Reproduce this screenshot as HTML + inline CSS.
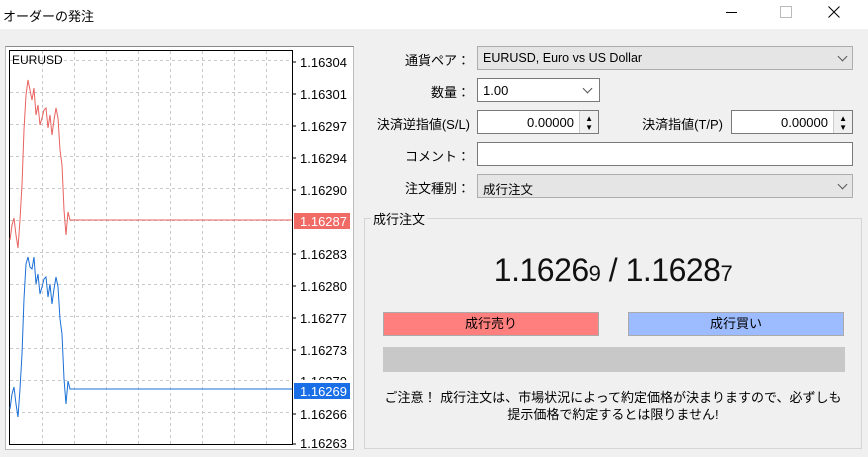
<!DOCTYPE html><html><head><meta charset="utf-8"><style>
body{margin:0;width:868px;height:457px;background:#f0f0f0;font-family:"Liberation Sans","Noto Sans CJK JP",sans-serif;font-size:13px;color:#000;position:relative;overflow:hidden}
.a{position:absolute}
.lbl{position:absolute;text-align:right;white-space:nowrap}
.box{position:absolute;background:#fff;border:1px solid #7a7a7a;box-sizing:border-box}
.cb{position:absolute;background:#e5e5e5;border:1px solid #adadad;box-sizing:border-box;padding:4px 5px;font-size:12.5px}
.chev{position:absolute;right:6px;top:6px;width:6px;height:6px;border-right:1px solid #555;border-bottom:1px solid #555;transform:rotate(45deg)}
.spin{position:absolute;right:0;top:0;width:18px;height:100%;border-left:1px solid #ccc;background:#f0f0f0}
.ax{position:absolute;left:300px;font-size:13px}
</style></head><body>
<div class="a" style="left:0;top:0;width:868px;height:29px;background:#fff"></div>
<div class="a" style="left:3px;top:6px;font-size:13px">オーダーの発注</div>
<div class="a" style="left:726px;top:12px;width:11px;height:1px;background:#000"></div>
<div class="a" style="left:780px;top:6px;width:10px;height:10px;border:1px solid #bbb"></div>
<svg class="a" style="left:828px;top:6px" width="12" height="12"><path d="M0.5 0.5L11.5 11.5M11.5 0.5L0.5 11.5" stroke="#000" stroke-width="1"/></svg>

<div class="a" style="left:5px;top:46px;width:349px;height:404px;border:1px solid #bbb;border-top-color:#888;background:#fff;box-sizing:border-box"></div>
<svg class="a" style="left:0;top:0" width="360" height="457">
<g stroke="#c8c8c8" stroke-dasharray="3,3" stroke-width="1">
<line x1="42.5" y1="51" x2="42.5" y2="444"/><line x1="74.5" y1="51" x2="74.5" y2="444"/><line x1="106.5" y1="51" x2="106.5" y2="444"/><line x1="138.5" y1="51" x2="138.5" y2="444"/><line x1="170.5" y1="51" x2="170.5" y2="444"/><line x1="202.5" y1="51" x2="202.5" y2="444"/><line x1="234.5" y1="51" x2="234.5" y2="444"/><line x1="266.5" y1="51" x2="266.5" y2="444"/>
<line x1="10" y1="60.5" x2="292" y2="60.5"/><line x1="10" y1="92.5" x2="292" y2="92.5"/><line x1="10" y1="124.5" x2="292" y2="124.5"/><line x1="10" y1="156.5" x2="292" y2="156.5"/><line x1="10" y1="188.5" x2="292" y2="188.5"/><line x1="10" y1="220.5" x2="292" y2="220.5"/><line x1="10" y1="252.5" x2="292" y2="252.5"/><line x1="10" y1="284.5" x2="292" y2="284.5"/><line x1="10" y1="316.5" x2="292" y2="316.5"/><line x1="10" y1="348.5" x2="292" y2="348.5"/><line x1="10" y1="380.5" x2="292" y2="380.5"/><line x1="10" y1="412.5" x2="292" y2="412.5"/>
</g>
<rect x="9.5" y="50.5" width="283" height="394" fill="none" stroke="#000"/>
<g stroke="#000"><line x1="293" y1="62" x2="296" y2="62"/><line x1="293" y1="94" x2="296" y2="94"/><line x1="293" y1="126" x2="296" y2="126"/><line x1="293" y1="158" x2="296" y2="158"/><line x1="293" y1="190" x2="296" y2="190"/><line x1="293" y1="254" x2="296" y2="254"/><line x1="293" y1="286" x2="296" y2="286"/><line x1="293" y1="318" x2="296" y2="318"/><line x1="293" y1="350" x2="296" y2="350"/><line x1="293" y1="414" x2="296" y2="414"/><line x1="293" y1="444" x2="296" y2="444"/></g>
<polyline fill="none" stroke="#e8625f" stroke-width="1" points="10,240 12,225 14,218 16,235 18,248 20,220 22,185 24,130 26,95 28,80 30,90 32,100 34,88 36,115 38,105 40,125 42,118 44,110 46,108 48,128 50,115 52,135 54,120 56,108 58,118 60,150 62,165 64,210 66,235 68,212 70,220 292,220"/>
<polyline fill="none" stroke="#1a6fd6" stroke-width="1" transform="translate(0,169)" points="10,240 12,225 14,218 16,235 18,248 20,220 22,185 24,130 26,95 28,88 30,98 32,100 34,88 36,115 38,105 40,125 42,118 44,110 46,108 48,128 50,115 52,135 54,120 56,108 58,118 60,150 62,165 64,210 66,235 68,212 70,220 292,220"/>
<rect x="294" y="213" width="56" height="16" fill="#f06a66"/>
<rect x="294" y="383" width="56" height="16" fill="#1a6fe6"/>
</svg>
<div class="a" style="left:12px;top:53px;font-size:12px">EURUSD</div>
<div class="ax" style="top:55px">1.16304</div><div class="ax" style="top:87px">1.16301</div><div class="ax" style="top:119px">1.16297</div><div class="ax" style="top:151px">1.16294</div><div class="ax" style="top:183px">1.16290</div><div class="ax" style="top:214px;color:#fff">1.16287</div><div class="ax" style="top:247px">1.16283</div><div class="ax" style="top:279px">1.16280</div><div class="ax" style="top:311px">1.16277</div><div class="ax" style="top:343px">1.16273</div><div class="ax" style="top:374px;clip-path:inset(0 0 60% 0)">1.16270</div><div class="ax" style="top:384px;color:#fff">1.16269</div><div class="ax" style="top:407px">1.16266</div><div class="ax" style="top:436px">1.16263</div>

<div class="lbl" style="right:398px;top:50px">通貨ペア：</div>
<div class="cb" style="left:477px;top:46px;width:376px;height:24px">EURUSD, Euro vs US Dollar<div class="chev"></div></div>
<div class="lbl" style="right:398px;top:82px">数量：</div>
<div class="box" style="left:477px;top:78px;width:123px;height:24px;padding:4px 5px">1.00<div class="chev" style="right:8px"></div></div>
<div class="lbl" style="right:398px;top:114px">決済逆指値(S/L)</div>
<div class="box" style="left:477px;top:110px;width:122px;height:24px;text-align:right;padding:4px 24px 0 0">0.00000<div class="spin"></div><div class="a" style="right:5px;top:3px;font-size:8px">▲</div><div class="a" style="right:5px;top:12px;font-size:8px">▼</div></div>
<div class="lbl" style="right:145px;top:114px">決済指値(T/P)</div>
<div class="box" style="left:731px;top:110px;width:122px;height:24px;text-align:right;padding:4px 24px 0 0">0.00000<div class="spin"></div><div class="a" style="right:5px;top:3px;font-size:8px">▲</div><div class="a" style="right:5px;top:12px;font-size:8px">▼</div></div>
<div class="lbl" style="right:398px;top:146px">コメント：</div>
<div class="box" style="left:477px;top:142px;width:376px;height:24px"></div>
<div class="lbl" style="right:398px;top:178px">注文種別：</div>
<div class="cb" style="left:477px;top:174px;width:376px;height:24px">成行注文<div class="chev"></div></div>

<div class="a" style="left:364px;top:218px;width:498px;height:231px;border:1px solid #d5d5d5;box-sizing:border-box"></div>
<div class="a" style="left:371px;top:209px;background:#f0f0f0;padding:0 2px">成行注文</div>
<div class="a" style="left:364px;width:498px;top:252px;text-align:center;font-size:32px;color:#111;letter-spacing:-0.5px">1.1626<span style="font-size:22px">9</span> / 1.1628<span style="font-size:22px">7</span></div>
<div class="a" style="left:383px;top:312px;width:216px;height:24px;background:#ff7f7f;border:1px solid #aaa;box-sizing:border-box;text-align:center;line-height:22px">成行売り</div>
<div class="a" style="left:628px;top:312px;width:216px;height:24px;background:#9dbcff;border:1px solid #aaa;box-sizing:border-box;text-align:center;line-height:22px">成行買い</div>
<div class="a" style="left:383px;top:347px;width:462px;height:25px;background:#c8c8c8"></div>
<div class="a" style="left:364px;width:498px;top:389px;text-align:center;line-height:17px">ご注意！ 成行注文は、市場状況によって約定価格が決まりますので、必ずしも<br>提示価格で約定するとは限りません!</div>
</body></html>
